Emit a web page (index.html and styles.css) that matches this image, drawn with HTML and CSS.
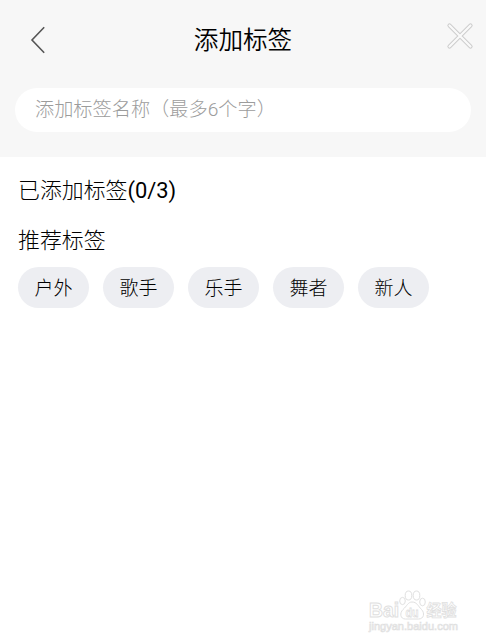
FILE: index.html
```
<!DOCTYPE html>
<html lang="zh-CN">
<head>
<meta charset="utf-8">
<title>添加标签</title>
<link rel="stylesheet" href="styles.css">
</head>
<body>
<header class="top">
  <div class="navbar">
    <svg class="back" width="16" height="28" viewBox="0 0 16 28"><path d="M14.2 1.3L2 14L14.2 26.7"/></svg>
    <h1 class="title">添加标签</h1>
    <svg class="close" width="28" height="28" viewBox="0 0 28 28"><path class="close-edge" d="M3.5 3.5L24.5 24.5M24.5 3.5L3.5 24.5"/><path class="close-fill" d="M3.5 3.5L24.5 24.5M24.5 3.5L3.5 24.5"/></svg>
  </div>
  <div class="field">添加标签名称（最多6个字）</div>
</header>
<main class="content">
  <h2 class="heading">已添加标签<span class="count">(0/3)</span></h2>
  <h2 class="heading suggested">推荐标签</h2>
  <div class="tags">
    <span class="tag">户外</span>
    <span class="tag">歌手</span>
    <span class="tag">乐手</span>
    <span class="tag">舞者</span>
    <span class="tag">新人</span>
  </div>
</main>
<svg class="watermark" width="100" height="50" viewBox="0 0 100 50">
  <g class="mark">
    <text class="brand" x="3" y="31" textLength="30" lengthAdjust="spacingAndGlyphs">Bai</text>
    <ellipse cx="36.5" cy="15" rx="2.8" ry="3.6"/>
    <ellipse cx="42.5" cy="9.5" rx="3.3" ry="4.5"/>
    <ellipse cx="50.5" cy="9.5" rx="3.3" ry="4.5"/>
    <ellipse cx="56.5" cy="16" rx="2.8" ry="3.8"/>
    <path d="M46 16C42 16 41 20 37 23.5C33.5 27 34 33 39.5 33H52.5C58 33 59 27 55.5 23.5C52 20 51 16 46 16Z"/>
    <text class="du" x="39.5" y="30.5" textLength="13" lengthAdjust="spacingAndGlyphs">du</text>
    <text class="cn" x="60.5" y="30" textLength="30" lengthAdjust="spacingAndGlyphs">经验</text>
    <text class="site" x="3" y="44" textLength="89" lengthAdjust="spacingAndGlyphs">jingyan.baidu.com</text>
  </g>
</svg>
</body>
</html>
```
FILE: styles.css
```
* { box-sizing: border-box; }
body {
  margin: 0;
  min-height: 644px;
  background: #fff;
  color: #000;
  font-family: Roboto, "Noto Sans CJK SC", sans-serif;
  font-weight: 300;
}
.top {
  height: 157px;
  padding: 20px 15px 0;
  background: #f7f7f7;
}
.navbar {
  display: grid;
  grid-template-columns: 28px 1fr 28px;
  grid-template-rows: 40px;
  height: 40px;
  align-items: center;
}
.back {
  margin-left: 15px;
  fill: none;
  stroke: #555;
  stroke-width: 1.6;
}
.title {
  margin: 0;
  padding-top: 2px;
  text-align: center;
  font-size: 24.6px;
  line-height: 38px;
  font-weight: 350;
}
.close {
  margin: -8px 0 0 3px;
  fill: none;
  stroke-linecap: round;
}
.close-edge { stroke: #ccc; stroke-width: 4.2; }
.close-fill { stroke: #fafafa; stroke-width: 2.2; }
.field {
  height: 44px;
  margin-top: 28px;
  padding-left: 20px;
  border-radius: 22px;
  background: #fff;
  color: #9c9c9c;
  font-size: 19.2px;
  line-height: 44px;
}
.content { padding: 18px 18px 0; }
.heading {
  margin: 0;
  font-size: 21.9px;
  line-height: 32px;
  font-weight: 300;
}
.count { font-weight: 400; }
.suggested { margin-top: 18px; }
.tags {
  display: flex;
  gap: 14px;
  margin-top: 10px;
}
.tag {
  width: 71px;
  height: 41px;
  border-radius: 21px;
  background: #edeef2;
  text-align: center;
  font-size: 19px;
  line-height: 44px;
}
.watermark {
  position: absolute;
  left: 366px;
  top: 586px;
}
.mark {
  fill: #fff;
  stroke: #e0e0e0;
  stroke-width: 1;
  font-family: "Liberation Sans", "Noto Sans CJK SC", sans-serif;
}
.brand { font-size: 21px; font-weight: 700; }
.du { font-size: 13px; font-weight: 700; stroke-width: 0.8; }
.cn { font-size: 16px; font-weight: 700; stroke-width: 0.8; }
.site { font-size: 11px; font-weight: 400; stroke-width: 0.7; }
```
